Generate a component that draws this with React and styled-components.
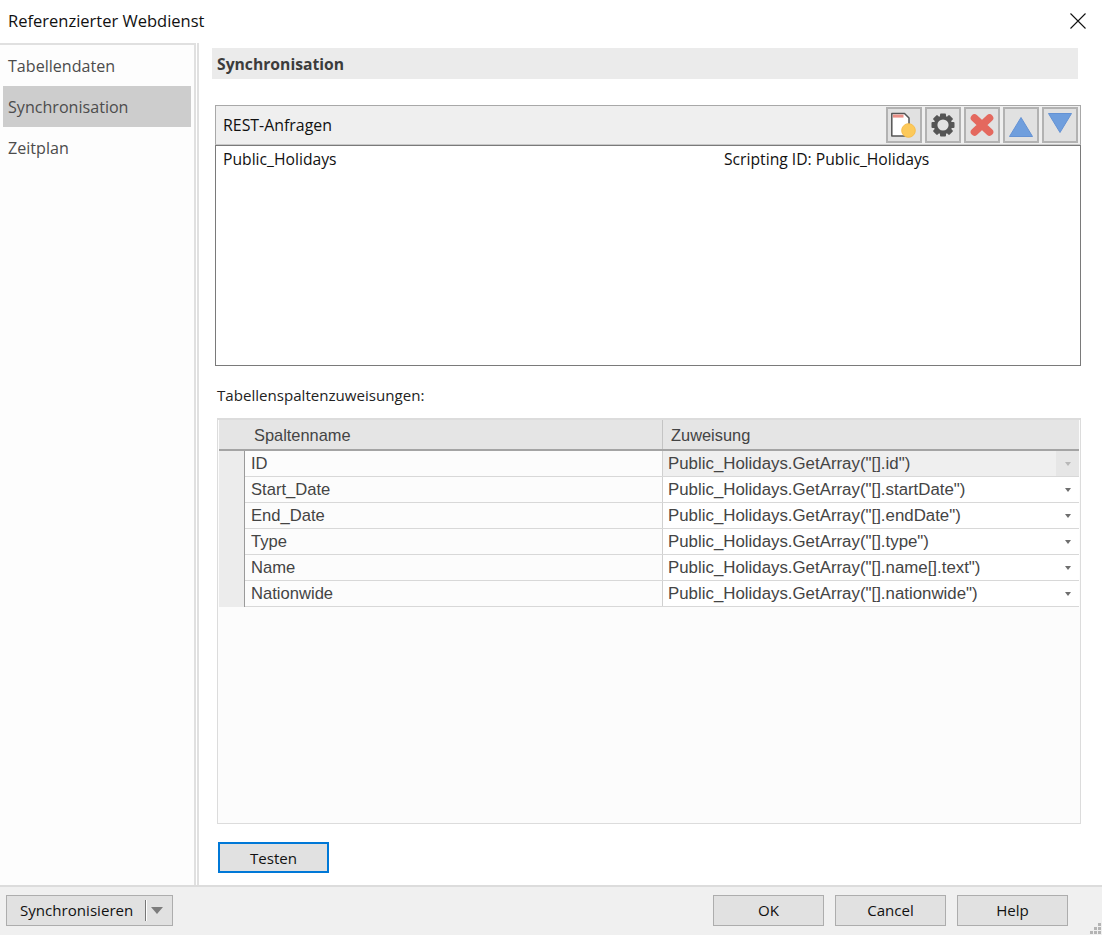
import React from "react";
import styled, { createGlobalStyle } from "styled-components";

const Global = createGlobalStyle`
  html, body { margin: 0; padding: 0; background: #fff; }
  body { font-family: "Open Sans", "Noto Sans", sans-serif; color: #000; }
`;

const rows = [
  ["ID", 'Public_Holidays.GetArray("[].id")'],
  ["Start_Date", 'Public_Holidays.GetArray("[].startDate")'],
  ["End_Date", 'Public_Holidays.GetArray("[].endDate")'],
  ["Type", 'Public_Holidays.GetArray("[].type")'],
  ["Name", 'Public_Holidays.GetArray("[].name[].text")'],
  ["Nationwide", 'Public_Holidays.GetArray("[].nationwide")'],
];

const NewIcon = () => (
  <svg width="30" height="30" viewBox="0 0 30 30">
    <path d="M2.8 3.5H15.5L20 8V26H2.8Z" fill="#fff" stroke="#555" strokeWidth="1.5" strokeLinejoin="round" />
    <rect x="4" y="4.6" width="10.5" height="3" fill="#ea8f86" />
    <circle cx="19.5" cy="20.5" r="6.8" fill="#fcc95a" stroke="#f8bd4a" />
  </svg>
);

const GearIcon = () => (
  <svg width="30" height="30" viewBox="0 0 30 30">
    <circle cx="15" cy="15" r="7.4" fill="none" stroke="#555" strokeWidth="3.6" />
    <g fill="#555">
      {[0, 45, 90, 135, 180, 225, 270, 315].map((a) => (
        <rect key={a} x="12" y="3.5" width="6" height="5" rx="1" transform={`rotate(${a} 15 15)`} />
      ))}
    </g>
  </svg>
);

const DeleteIcon = () => (
  <svg width="30" height="30" viewBox="0 0 30 30">
    <path d="M7.5 8L22.5 22M22.5 8L7.5 22" stroke="#e4685e" strokeWidth="7.6" strokeLinecap="round" />
  </svg>
);

const UpIcon = () => (
  <svg width="30" height="30" viewBox="0 0 30 30">
    <path d="M15 7.5L26.5 26.5H3.5Z" fill="#6f9edd" stroke="#6492d4" strokeLinejoin="round" />
  </svg>
);

const DownIcon = () => (
  <svg width="30" height="30" viewBox="0 0 30 30">
    <path d="M3.5 3.5H26.5L15 22.5Z" fill="#6f9edd" stroke="#6492d4" strokeLinejoin="round" />
  </svg>
);

const App = () => (
  <>
    <Global />
    <Dialog>
      <TitleBar>
        <Title>Referenzierter Webdienst</Title>
        <svg width="16" height="16" viewBox="0 0 16 16">
          <path d="M.5.5L15.5 15.5M15.5.5L.5 15.5" stroke="#111" strokeWidth="1.1" fill="none" />
        </svg>
      </TitleBar>
      <Body>
        <Sidebar>
          <NavItem>Tabellendaten</NavItem>
          <NavItem $active>Synchronisation</NavItem>
          <NavItem>Zeitplan</NavItem>
        </Sidebar>
        <Main>
          <SectionHeader>Synchronisation</SectionHeader>
          <ToolPanel>
            <Toolbar>
              <ToolbarLabel>REST-Anfragen</ToolbarLabel>
              <ToolButtons>
                <ToolButton><NewIcon /></ToolButton>
                <ToolButton><GearIcon /></ToolButton>
                <ToolButton><DeleteIcon /></ToolButton>
                <ToolButton><UpIcon /></ToolButton>
                <ToolButton><DownIcon /></ToolButton>
              </ToolButtons>
            </Toolbar>
            <ListBox>
              <ListName>Public_Holidays</ListName>
              <span>Scripting ID: Public_Holidays</span>
            </ListBox>
          </ToolPanel>
          <FieldLabel>Tabellenspaltenzuweisungen:</FieldLabel>
          <Grid>
            <GridHead>
              <HeadName>Spaltenname</HeadName>
              <HeadAssign>Zuweisung</HeadAssign>
            </GridHead>
            {rows.map(([name, value], i) => (
              <GridRow key={name}>
                <RowGutter />
                <NameCell>{name}</NameCell>
                <ValueCell $locked={i === 0}>
                  <ValueText>{value}</ValueText>
                  <Arrow $locked={i === 0} />
                </ValueCell>
              </GridRow>
            ))}
          </Grid>
          <TestButton>Testen</TestButton>
        </Main>
      </Body>
      <Footer>
        <SplitButton>
          <SplitLabel>Synchronisieren</SplitLabel>
          <SplitCaret />
        </SplitButton>
        <FooterActions>
          <PlainButton>OK</PlainButton>
          <PlainButton>Cancel</PlainButton>
          <PlainButton>Help</PlainButton>
        </FooterActions>
        <Grip width="11" height="11" viewBox="0 0 11 11" fill="#b4b4b4">
          <rect x="8" y="0" width="3" height="3" />
          <rect x="4" y="4" width="3" height="3" />
          <rect x="8" y="4" width="3" height="3" />
          <rect x="0" y="8" width="3" height="3" />
          <rect x="4" y="8" width="3" height="3" />
          <rect x="8" y="8" width="3" height="3" />
        </Grip>
      </Footer>
    </Dialog>
  </>
);

const Dialog = styled.div`
  width: 1102px;
  height: 935px;
  display: flex;
  flex-direction: column;
  overflow: hidden;
`;

const TitleBar = styled.div`
  height: 43px;
  flex: none;
  box-sizing: border-box;
  display: flex;
  align-items: center;
  justify-content: space-between;
  padding: 0 16px 2px 8px;
`;

const Title = styled.div`
  font-size: 16.5px;
  color: #111;
`;

const Body = styled.div`
  flex: 1;
  display: flex;
  min-height: 0;
`;

const Sidebar = styled.div`
  width: 196px;
  flex: none;
  box-sizing: border-box;
  border-top: 2px solid #e0e0e0;
  border-right: 2px solid #e0e0e0;
  background: #fdfdfd;
  padding: 0 3px;
`;

const NavItem = styled.div`
  width: 188px;
  height: 41px;
  box-sizing: border-box;
  padding-left: 5px;
  display: flex;
  align-items: center;
  font-size: 16.1px;
  color: #4c4c4c;
  background: ${(p) => (p.$active ? "#cdcdcd" : "transparent")};
`;

const Main = styled.div`
  flex: 1;
  min-width: 0;
  border-left: 2px solid #e0e0e0;
  margin-left: 1px;
  padding: 5px 21px 0 13px;
  display: flex;
  flex-direction: column;
  align-items: flex-start;
`;

const SectionHeader = styled.div`
  width: 866px;
  height: 31px;
  flex: none;
  box-sizing: border-box;
  padding-left: 5px;
  display: flex;
  align-items: center;
  background: #ebebeb;
  font-size: 15.7px;
  font-weight: 700;
  color: #3c3c3c;
`;

const ToolPanel = styled.div`
  width: 866px;
  margin: 26px 0 0 3px;
`;

const Toolbar = styled.div`
  height: 40px;
  box-sizing: border-box;
  border: 1px solid #a8a8a8;
  border-bottom: 1px solid #c8c8c8;
  background: #efefef;
  display: flex;
  align-items: center;
  justify-content: space-between;
  padding: 0 1px 0 7px;
`;

const ToolbarLabel = styled.div`
  font-size: 15.9px;
  color: #111;
`;

const ToolButtons = styled.div`
  display: flex;
  gap: 3px;
  margin-right: 1px;
`;

const ToolButton = styled.div`
  width: 36px;
  height: 36px;
  box-sizing: border-box;
  border: 2px solid #b2b2b2;
  background: #e1e1e1;
  display: flex;
  align-items: center;
  justify-content: center;
`;

const ListBox = styled.div`
  height: 221px;
  box-sizing: border-box;
  border: 1px solid #7a7a7a;
  background: #fff;
  display: flex;
  padding: 2px 7px;
  font-size: 15.7px;
  line-height: 22px;
  color: #111;
`;

const ListName = styled.span`
  width: 501px;
  flex: none;
`;

const FieldLabel = styled.div`
  margin: 18px 0 0 5px;
  height: 22px;
  line-height: 22px;
  font-size: 15.1px;
  color: #222;
`;

const Grid = styled.div`
  width: 864px;
  height: 406px;
  flex: none;
  margin: 12px 0 0 5px;
  box-sizing: border-box;
  border-style: solid;
  border-width: 2px 1px 1px 1px;
  border-color: #dcdcdc;
  background: #fcfcfc;
  padding: 0 1px;
  font-family: "Liberation Sans", Arial, sans-serif;
  font-size: 16.6px;
  color: #444;
`;

const GridHead = styled.div`
  height: 31px;
  box-sizing: border-box;
  display: grid;
  grid-template-columns: 443px 1fr;
  background: #e5e5e5;
  border-bottom: 2px solid #a4a4a4;
  font-size: 16.4px;
`;

const HeadName = styled.div`
  padding: 2px 0 0 35px;
  display: flex;
  align-items: center;
`;

const HeadAssign = styled.div`
  padding: 2px 0 0 8px;
  display: flex;
  align-items: center;
  border-left: 1px solid #c4c4c4;
`;

const GridRow = styled.div`
  height: 26px;
  box-sizing: border-box;
  display: grid;
  grid-template-columns: 26px 417px 1fr;
  border-bottom: 1px solid #d8d8d8;
`;

const RowGutter = styled.div`
  background: #ececec;
  border-right: 1px solid #9a9a9a;
  margin-bottom: -1px;
`;

const NameCell = styled.div`
  padding-left: 6px;
  display: flex;
  align-items: center;
`;

const ValueCell = styled.div`
  position: relative;
  padding-left: 5px;
  display: flex;
  align-items: center;
  justify-content: space-between;
  border-left: 1px solid #d0d0d0;
  background: ${(p) => (p.$locked ? "#efefef" : "#fff")};
`;

const ValueText = styled.span`
  white-space: nowrap;
  font-size: 16.85px;
`;

const Arrow = styled.span`
  width: 23px;
  align-self: stretch;
  display: flex;
  align-items: center;
  justify-content: center;
  background: ${(p) => (p.$locked ? "#e6e6e6" : "transparent")};
  &::before {
    content: "";
    border-left: 3.5px solid transparent;
    border-right: 3.5px solid transparent;
    border-top: 4px solid ${(p) => (p.$locked ? "#b8b8b8" : "#6e6e6e")};
  }
`;

const BaseButton = styled.div`
  height: 31px;
  box-sizing: border-box;
  display: flex;
  align-items: center;
  justify-content: center;
  background: #e1e1e1;
  border: 1px solid #adadad;
  font-size: 15.1px;
  color: #111;
`;

const TestButton = styled(BaseButton)`
  width: 111px;
  flex: none;
  margin: 18px 0 0 6px;
  border: 2px solid #0078d7;
`;

const Footer = styled.div`
  position: relative;
  height: 50px;
  flex: none;
  box-sizing: border-box;
  border-top: 2px solid #dcdcdc;
  background: #f0f0f0;
  display: flex;
  align-items: center;
  justify-content: space-between;
  padding: 8px 34px 10px 6px;
`;

const SplitButton = styled(BaseButton)`
  width: 167px;
  justify-content: flex-start;
  padding-left: 13px;
`;

const SplitLabel = styled.span`
  width: 126px;
  flex: none;
  box-shadow: 1px 0 0 #fff, inset -1px 0 0 #777;
  line-height: 21px;
`;

const SplitCaret = styled.span`
  margin-left: 5px;
  border-left: 6px solid transparent;
  border-right: 6px solid transparent;
  border-top: 7px solid #7c7c7c;
`;

const FooterActions = styled.div`
  display: flex;
  gap: 11px;
`;

const PlainButton = styled(BaseButton)`
  width: 111px;
`;

const Grip = styled.svg`
  position: absolute;
  right: 1px;
  bottom: 1px;
`;

export default App;
